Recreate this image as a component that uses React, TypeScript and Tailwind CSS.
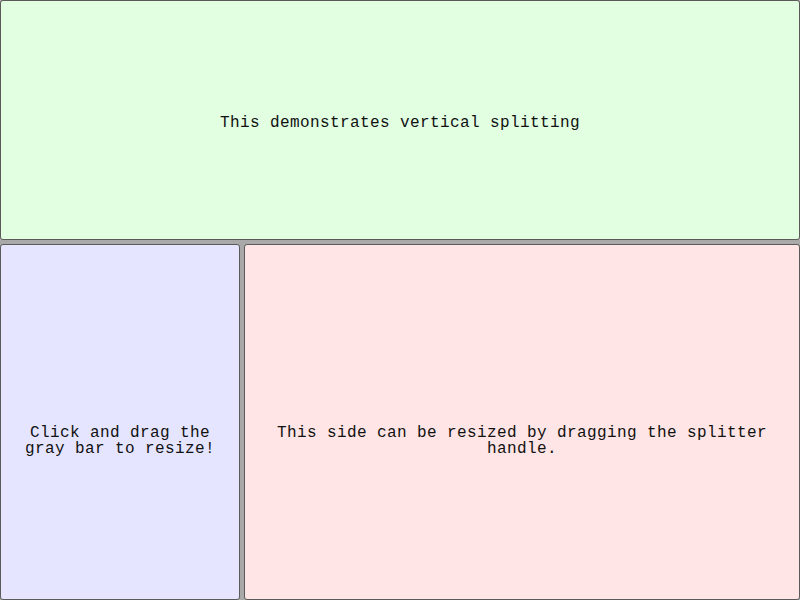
export default function App() {
  return (
    <div
      className="flex h-[600px] w-[800px] flex-col gap-[4px] bg-[#a9a9a9] text-[16px] leading-[16px] tracking-[0.4px] text-[#111]"
      style={{ fontFamily: '"Liberation Mono", "DejaVu Sans Mono", monospace' }}
    >
      {/* Top pane */}
      <div className="flex h-[240px] items-center justify-center rounded-[3px] border border-[#5a5a5a] bg-[#e2ffe2] pt-[5px] text-center">
        This demonstrates vertical splitting
      </div>

      {/* Bottom split */}
      <div className="flex flex-1 gap-[4px]">
        <div className="flex w-[240px] items-center justify-center rounded-[3px] border border-[#5a5a5a] bg-[#e5e5ff] px-3 pt-[38px] text-center">
          Click and drag the gray bar to resize!
        </div>
        <div className="flex flex-1 items-center justify-center rounded-[3px] border border-[#5a5a5a] bg-[#ffe5e5] px-3 pt-[38px] text-center">
          This side can be resized by dragging the splitter handle.
        </div>
      </div>
    </div>
  );
}
